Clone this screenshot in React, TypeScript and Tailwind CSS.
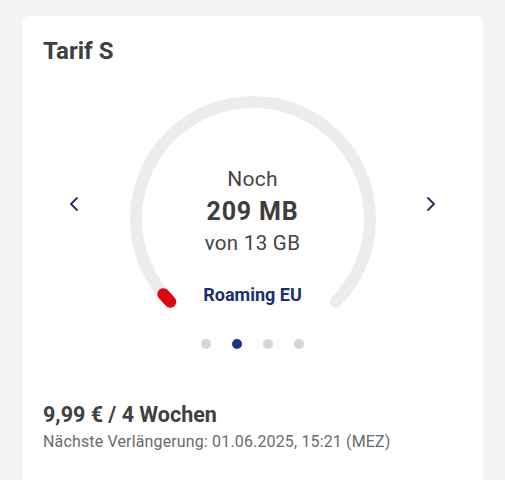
import React from 'react';

const CX = 130;
const CY = 130;
const R = 117;

function pt(deg: number) {
  const a = (deg * Math.PI) / 180;
  return [CX + R * Math.cos(a), CY + R * Math.sin(a)];
}

function arc(from: number, to: number) {
  const [x1, y1] = pt(from);
  const [x2, y2] = pt(to);
  const large = to - from > 180 ? 1 : 0;
  return `M ${x1} ${y1} A ${R} ${R} 0 ${large} 1 ${x2} ${y2}`;
}

function Chevron({ dir }: { dir: 'left' | 'right' }) {
  return (
    <button className="flex h-6 w-6 items-center justify-center text-[#1f2d62]">
      <svg width="24" height="24" viewBox="0 0 24 24" fill="none" stroke="currentColor" strokeWidth={1.8} strokeLinecap="round" strokeLinejoin="round">
        {dir === 'left' ? <path d="M15 6l-6 6 6 6" /> : <path d="M9 6l6 6-6 6" />}
      </svg>
    </button>
  );
}

function Gauge() {
  // 209 MB of 13 GB used → tiny red segment at the start
  const used = 209 / 13000;
  const end = 135 + Math.max(used * 270, 5);

  return (
    <div className="relative h-[230px] w-[260px]">
      <svg className="absolute left-0 top-0" width="260" height="230" viewBox="0 0 260 230" fill="none">
        <path d={arc(135, 405)} stroke="#ececec" strokeWidth={12} strokeLinecap="round" />
        <path d={arc(135, end)} stroke="#dc0612" strokeWidth={12} strokeLinecap="round" />
      </svg>
      <div className="absolute inset-0 flex flex-col items-center pt-[78px]">
        <div className="text-[21px] leading-[24px] tracking-[0.3px] text-[#444]">Noch</div>
        <div className="mt-[6px] text-[25px] font-bold leading-[30px] tracking-[0.8px] text-[#3d3d3d]">209 MB</div>
        <div className="mt-[4px] text-[20.5px] leading-[24px] tracking-[0.3px] text-[#444]">von 13 GB</div>
        <div className="mt-[28px] text-[18px] font-bold leading-[24px] text-[#1d2f6f]">Roaming EU</div>
      </div>
    </div>
  );
}

export default function App() {
  const dots = [0, 1, 2, 3];
  const active = 1;

  return (
    <div
      className="h-[480px] overflow-hidden bg-[#f3f3f3] px-[22px] pt-[16px]"
      style={{ fontFamily: 'Roboto, "Noto Sans", sans-serif' }}
    >
      <div className="rounded-lg bg-white px-[21px] pb-[40px] pt-[21px]">
        <h2 className="text-[24px] font-bold leading-[28px] text-[#404040]">Tarif S</h2>

        <div className="mt-[24px] flex items-center justify-between px-[19px]">
          <Chevron dir="left" />
          <Gauge />
          <Chevron dir="right" />
        </div>

        <div className="mt-[20px] flex justify-center gap-[21px]">
          {dots.map((d) => (
            <span
              key={d}
              className={`h-[10px] w-[10px] rounded-full ${d === active ? 'bg-[#1b3585]' : 'bg-[#d6d6d6]'}`}
            />
          ))}
        </div>

        <div className="mt-[52px] text-[21.5px] font-bold leading-[28px] text-[#404040]">9,99 € / 4 Wochen</div>
        <div className="mt-[1px] text-[16px] leading-[24px] tracking-[0.15px] text-[#6b6b6b]">
          Nächste Verlängerung: 01.06.2025, 15:21 (MEZ)
        </div>
      </div>
    </div>
  );
}
